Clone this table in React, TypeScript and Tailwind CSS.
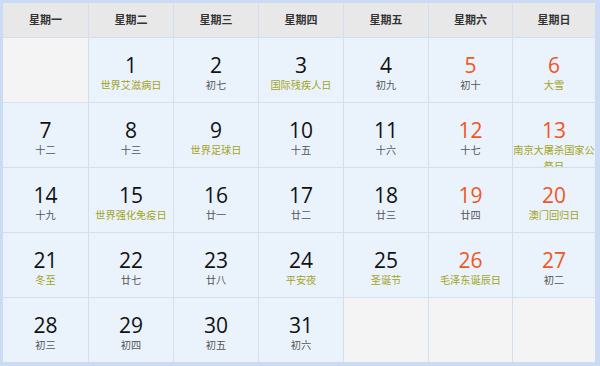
import React from "react"

type Day = { d: number; sub: string; fest?: boolean; red?: boolean } | null

const weekNames = ["星期一", "星期二", "星期三", "星期四", "星期五", "星期六", "星期日"]

const weeks: Day[][] = [
  [
    null,
    { d: 1, sub: "世界艾滋病日", fest: true },
    { d: 2, sub: "初七" },
    { d: 3, sub: "国际残疾人日", fest: true },
    { d: 4, sub: "初九" },
    { d: 5, sub: "初十", red: true },
    { d: 6, sub: "大雪", fest: true, red: true },
  ],
  [
    { d: 7, sub: "十二" },
    { d: 8, sub: "十三" },
    { d: 9, sub: "世界足球日", fest: true },
    { d: 10, sub: "十五" },
    { d: 11, sub: "十六" },
    { d: 12, sub: "十七", red: true },
    { d: 13, sub: "南京大屠杀国家公祭日", fest: true, red: true },
  ],
  [
    { d: 14, sub: "十九" },
    { d: 15, sub: "世界强化免疫日", fest: true },
    { d: 16, sub: "廿一" },
    { d: 17, sub: "廿二" },
    { d: 18, sub: "廿三" },
    { d: 19, sub: "廿四", red: true },
    { d: 20, sub: "澳门回归日", fest: true, red: true },
  ],
  [
    { d: 21, sub: "冬至", fest: true },
    { d: 22, sub: "廿七" },
    { d: 23, sub: "廿八" },
    { d: 24, sub: "平安夜", fest: true },
    { d: 25, sub: "圣诞节", fest: true },
    { d: 26, sub: "毛泽东诞辰日", fest: true, red: true },
    { d: 27, sub: "初二", red: true },
  ],
  [
    { d: 28, sub: "初三" },
    { d: 29, sub: "初四" },
    { d: 30, sub: "初五" },
    { d: 31, sub: "初六" },
    null,
    null,
    null,
  ],
]

const DayCell: React.FC<{ day: Day }> = ({ day }) => {
  if (!day) return <div className="h-[64px] bg-[#f4f4f4]" />
  return (
    <div className="h-[64px] overflow-hidden bg-[#eaf3fc] pt-[15px] text-center">
      <div
        className={`text-[21px] leading-[24px] ${day.red ? "text-[#f2561d]" : "text-[#111]"}`}
      >
        {day.d}
      </div>
      <div
        className={`text-[10.2px] leading-[16px] ${day.fest ? "text-[#a3a322]" : "text-[#555]"}`}
      >
        {day.sub}
      </div>
    </div>
  )
}

export default function App() {
  return (
    <div
      className="h-[366px] w-[600px] bg-white"
      style={{ fontFamily: '"Open Sans", "Noto Sans CJK SC", sans-serif' }}
    >
      <div className="h-[366px] w-[600px] border-t-[3px] border-l-[3px] border-r-[5px] border-b-[4px] border-[#c9dcf4] bg-[#d3dfee]">
        <div className="grid grid-cols-[85px_84px_84px_84px_84px_83px_1fr] gap-px">
          {weekNames.map((w) => (
            <div
              key={w}
              className="flex h-[34px] items-center justify-center bg-[#e8e8e8] text-[11px] font-bold text-[#333]"
            >
              {w}
            </div>
          ))}
          {weeks.flat().map((day, i) => (
            <DayCell key={i} day={day} />
          ))}
        </div>
      </div>
    </div>
  )
}
